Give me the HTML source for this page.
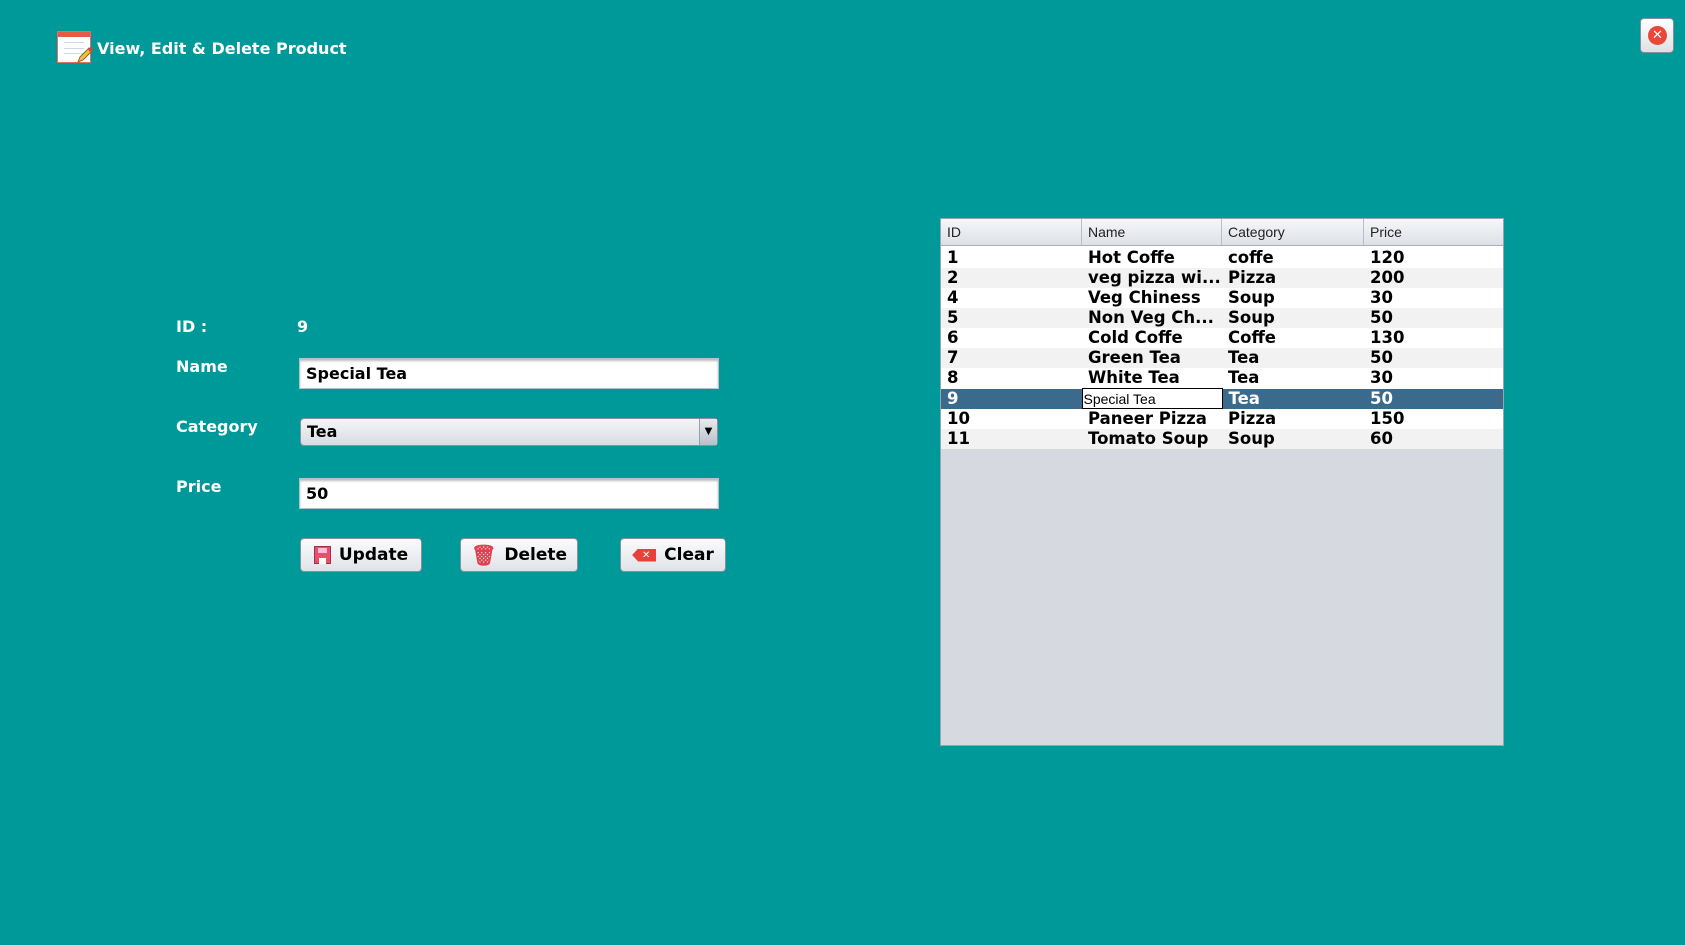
<!DOCTYPE html>
<html><head><meta charset="utf-8"><style>
*{margin:0;padding:0;box-sizing:border-box}
body{width:1685px;height:945px;background:#009999;position:relative;overflow:hidden;font-family:"DejaVu Sans","Liberation Sans",sans-serif}
.a{position:absolute}
.lbl{color:#fff;font-weight:bold;font-size:16px}
.fld{background:#fff;border:1px solid #b8c0c8;box-shadow:inset 0 2px 2px #bbb;font-weight:bold;font-size:16px;color:#000;padding-left:6px;display:flex;align-items:center}
.btn{border:1px solid #8a9098;border-radius:4px;background:linear-gradient(#fafbfc,#dfe3e8);display:flex;align-items:center;justify-content:center;font-weight:bold;font-size:17px;color:#000;gap:8px}
table{border-collapse:collapse;font-weight:bold;font-size:16.5px;table-layout:fixed}
td{height:20px;padding:0 0 0 6px;line-height:20px;white-space:nowrap;overflow:hidden;background:#fff}
tr{height:20px}
tr:nth-child(even) td{background:#f2f2f2}
tr.sel td{background:#3a6a8c;color:#fff}
.hd{font-family:"Liberation Sans",sans-serif;font-size:14px;color:#222;display:flex;height:27px;background:linear-gradient(#f6f7f9,#dde0e6);border-bottom:1px solid #a8b0b8}
.hd div{border-right:1px solid #b8bec6;padding-left:6px;line-height:27px}
</style></head><body>
<div class="a" style="left:57px;top:31px;width:34px;height:32px;background:#fff;border:1px solid #e07060">
<div style="height:5px;background:#e85a48"></div>
<div style="margin:5px 6px;height:1px;background:#cfd8e8"></div><div style="margin:4px 6px;height:1px;background:#cfd8e8"></div><div style="margin:4px 6px;height:1px;background:#cfd8e8"></div>
</div>
<svg class="a" style="left:76px;top:46px" width="18" height="18"><path d="M2 16 L4 11 L13 2 L16 5 L7 14 Z" fill="#f0c040" stroke="#8a6a20" stroke-width="1"/><circle cx="14.5" cy="3.5" r="2" fill="#e04040"/></svg>
<div class="a lbl" style="left:97px;top:39px;font-size:16px">View, Edit &amp; Delete Product</div>
<div class="a" style="left:1640px;top:18px;width:34px;height:35px;border:1px solid #8a9098;border-radius:4px;background:linear-gradient(#fff,#dde0e4)">
<div style="position:absolute;left:7px;top:7px;width:19px;height:19px;border-radius:50%;background:#e8483a;color:#fff;font-size:13px;line-height:19px;text-align:center;font-weight:bold">✕</div></div>
<div class="a lbl" style="left:176px;top:317px">ID :</div>
<div class="a lbl" style="left:297px;top:317px">9</div>
<div class="a lbl" style="left:176px;top:357px">Name</div>
<div class="a lbl" style="left:176px;top:417px">Category</div>
<div class="a lbl" style="left:176px;top:477px">Price</div>
<div class="a fld" style="left:299px;top:358px;width:420px;height:31px">Special Tea</div>
<div class="a" style="left:300px;top:418px;width:418px;height:28px;border:1px solid #8a9098;border-radius:4px;background:linear-gradient(#f4f5f7,#d8dce2);font-weight:bold;font-size:16px;padding-left:6px;line-height:26px">Tea
<div style="position:absolute;right:0;top:0;width:18px;height:26px;border-left:1px solid #9aa0a8;background:linear-gradient(#e8ebef,#b8c0cc);font-size:10px;text-align:center;line-height:26px">▼</div></div>
<div class="a fld" style="left:299px;top:478px;width:420px;height:31px">50</div>
<div class="a btn" style="left:300px;top:538px;width:122px;height:34px"><span style="display:inline-block;width:17px;height:18px;background:#e8506a;border:1px solid #a03048;position:relative"><span style="position:absolute;left:3px;top:1px;width:9px;height:5px;background:#fbd"></span><span style="position:absolute;left:4px;top:11px;width:7px;height:6px;background:#fff"></span></span>Update</div>
<div class="a btn" style="left:460px;top:538px;width:118px;height:34px"><span style="color:#e04050;font-size:20px;line-height:1">🗑</span>Delete</div>
<div class="a btn" style="left:620px;top:538px;width:106px;height:34px"><span style="display:inline-block;width:24px;height:13px;background:#e8403a;clip-path:polygon(25% 0,100% 0,100% 100%,25% 100%,0 50%);color:#fff;font-size:10px;line-height:13px;text-align:center;padding-left:4px">✕</span>Clear</div>
<div class="a" style="left:940px;top:218px;width:564px;height:528px;background:#d6d9e0;border:1px solid #9aa4ae">
<div class="hd"><div style="width:141px">ID</div><div style="width:140px">Name</div><div style="width:142px">Category</div><div style="width:139px;border-right:0">Price</div></div>
<table style="width:562px;margin-top:0"><colgroup><col style="width:141px"><col style="width:140px"><col style="width:142px"><col></colgroup>
<tr><td style="padding-top:2px">1</td><td style="padding-top:2px">Hot Coffe</td><td style="padding-top:2px">coffe</td><td style="padding-top:2px">120</td></tr>
<tr><td>2</td><td>veg pizza wi...</td><td>Pizza</td><td>200</td></tr>
<tr><td>4</td><td>Veg Chiness</td><td>Soup</td><td>30</td></tr>
<tr><td>5</td><td>Non Veg Ch...</td><td>Soup</td><td>50</td></tr>
<tr><td>6</td><td>Cold Coffe</td><td>Coffe</td><td>130</td></tr>
<tr><td>7</td><td>Green Tea</td><td>Tea</td><td>50</td></tr>
<tr><td>8</td><td>White Tea</td><td>Tea</td><td>30</td></tr>
<tr class="sel"><td>9</td><td style="background:#fff;color:#000;font-weight:normal;font-family:'Liberation Sans',sans-serif;font-size:14px;border:1px solid #000;padding-left:1px;line-height:18px">Special Tea</td><td>Tea</td><td>50</td></tr>
<tr><td>10</td><td>Paneer Pizza</td><td>Pizza</td><td>150</td></tr>
<tr><td>11</td><td>Tomato Soup</td><td>Soup</td><td>60</td></tr>
</table></div>
</body></html>
